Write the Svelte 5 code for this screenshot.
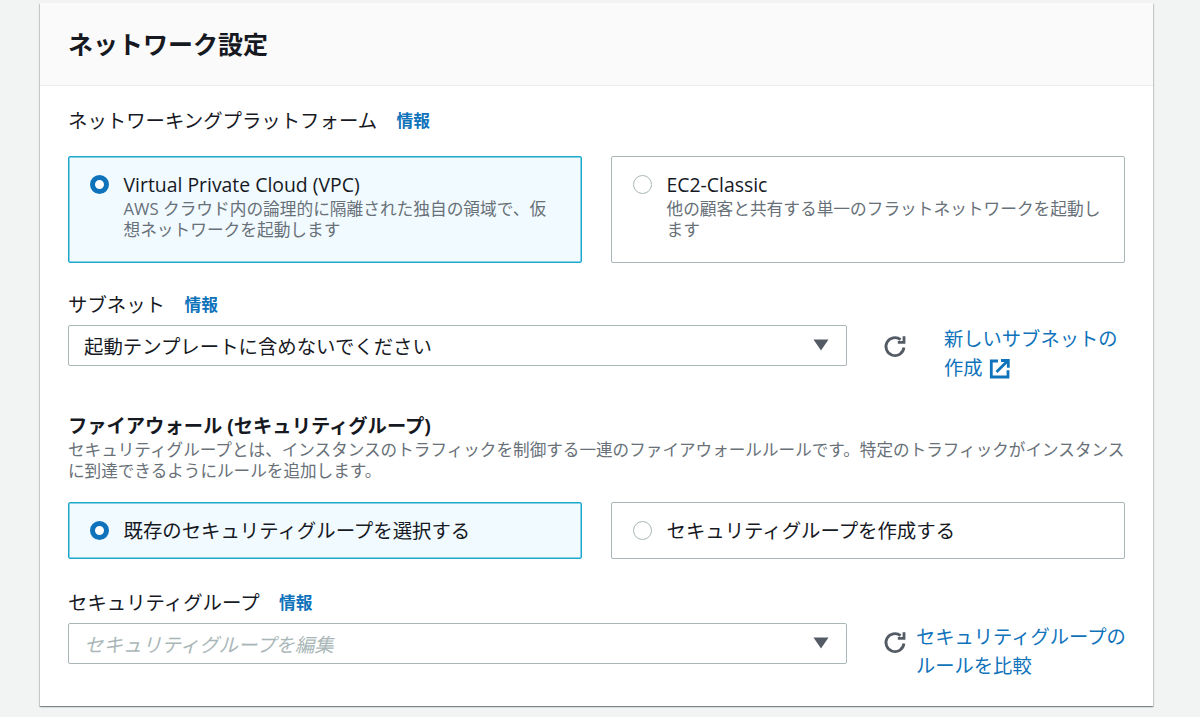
<script>
</script>

{#snippet refresh()}
  <svg class="refresh" width="24" height="24" viewBox="0 0 24 24" fill="none" stroke="#545b64" stroke-width="2.8">
    <path d="M17.6 5.6A9 9 0 1 0 20.9 13.5" />
    <path d="M21 2.2V8.4H14.8" />
  </svg>
{/snippet}

{#snippet caret()}
  <svg class="caret" width="16" height="12" viewBox="0 0 16 12"><path d="M0.5 0.5H15.5L8 11.5Z" fill="#545b64" /></svg>
{/snippet}

<div class="page">
  <section class="panel">
    <header class="panel-head"><h2>ネットワーク設定</h2></header>
    <div class="panel-body">
      <div class="label-row first"><span>ネットワーキングプラットフォーム</span><a href="#info">情報</a></div>

      <div class="tiles tall">
        <div class="tile selected">
          <span class="radio on"></span>
          <div>
            <div class="tile-title">Virtual Private Cloud (VPC)</div>
            <div class="tile-desc">AWS クラウド内の論理的に隔離された独自の領域で、仮想ネットワークを起動します</div>
          </div>
        </div>
        <div class="tile">
          <span class="radio"></span>
          <div>
            <div class="tile-title">EC2-Classic</div>
            <div class="tile-desc">他の顧客と共有する単一のフラットネットワークを起動します</div>
          </div>
        </div>
      </div>

      <div class="label-row subnet"><span>サブネット</span><a href="#info">情報</a></div>
      <div class="select-row">
        <div class="select"><span>起動テンプレートに含めないでください</span>{@render caret()}</div>
        <div class="side first-side">
          {@render refresh()}
          <a class="side-link" href="#new">新しいサブネットの作成
            <svg class="external" width="22" height="20" viewBox="0 0 22 20" fill="none" stroke="#0f73bb" stroke-width="2.8">
              <path d="M9 2H2.3V18H19V11.2" />
              <path d="M7.5 13L18 2.5M12 1.5H19.3V8.8" />
            </svg>
          </a>
        </div>
      </div>

      <h3>ファイアウォール (セキュリティグループ)</h3>
      <p class="hint">セキュリティグループとは、インスタンスのトラフィックを制御する一連のファイアウォールルールです。特定のトラフィックがインスタンスに到達できるようにルールを追加します。</p>

      <div class="tiles short">
        <div class="tile selected center">
          <span class="radio on"></span>
          <div class="tile-plain">既存のセキュリティグループを選択する</div>
        </div>
        <div class="tile center">
          <span class="radio"></span>
          <div class="tile-plain">セキュリティグループを作成する</div>
        </div>
      </div>

      <div class="label-row group"><span>セキュリティグループ</span><a href="#info">情報</a></div>
      <div class="select-row">
        <div class="select"><span class="placeholder">セキュリティグループを編集</span>{@render caret()}</div>
        <div class="side compare">
          {@render refresh()}
          <a class="side-link" href="#compare">セキュリティグループのルールを比較</a>
        </div>
      </div>
    </div>
  </section>
</div>

<style>
  :global(body) {
    margin: 0;
    background: #f2f3f3;
    font-family: "Open Sans", "Noto Sans CJK JP", sans-serif;
    color: #16191f;
  }

  .page {
    height: 717px;
    box-sizing: border-box;
    padding: 3px 47px 0 40px;
    overflow: hidden;
  }

  .panel {
    height: 703px;
    background: #fff;
    box-shadow: 0 1px 1px 0 rgba(0, 28, 36, 0.3), 1px 1px 1px 0 rgba(0, 28, 36, 0.15), -1px 1px 1px 0 rgba(0, 28, 36, 0.15);
  }

  .panel-head {
    height: 83px;
    box-sizing: border-box;
    padding: 0 28px;
    display: flex;
    align-items: center;
    background: #fafafa;
    border-bottom: 1px solid #eaeded;
  }

  h2 {
    margin: 0;
    font-size: 25px;
    font-weight: 700;
    line-height: 32px;
  }

  .panel-body {
    padding: 0 28px;
  }

  .label-row {
    display: flex;
    align-items: center;
    gap: 19.5px;
    font-size: 19.4px;
    line-height: 28px;
  }

  .label-row a {
    color: #0f73bb;
    font-size: 16.7px;
    font-weight: 700;
    text-decoration: none;
  }

  .label-row.first { margin-top: 21px; }
  .label-row.subnet { margin-top: 28px; }
  .label-row.group { margin-top: 30px; }

  .tiles {
    display: grid;
    grid-template-columns: 514px 514px;
    gap: 29px;
  }

  .tiles.tall { margin-top: 21px; height: 107px; }
  .tiles.short { height: 57px; margin-top: 21px; }

  .tile {
    box-sizing: border-box;
    display: flex;
    gap: 14.5px;
    padding: 15px 21px;
    border: 1px solid #aab7b8;
    border-radius: 2px;
    background: #fff;
  }

  .tile.selected {
    background: #f1faff;
    border-color: #1ea7cc;
    box-shadow: inset 0 0 0 0.5px #1ea7cc;
  }

  .tile.center {
    align-items: center;
    padding-top: 0;
    padding-bottom: 0;
  }

  .radio {
    flex: none;
    box-sizing: border-box;
    width: 19px;
    height: 19px;
    margin-top: 3px;
    border-radius: 50%;
    border: 1px solid #aab7b8;
    background: #fff;
  }

  .tile.center .radio { margin-top: 0; }

  .radio.on {
    border: 5.5px solid #0f73bb;
  }

  .tile-title {
    font-size: 19.4px;
    line-height: 26px;
  }

  .tile-desc {
    color: #687078;
    font-size: 16.7px;
    line-height: 21px;
  }

  .tile-plain {
    font-size: 19.4px;
    line-height: 28px;
  }

  .select-row {
    display: flex;
    margin-top: 6px;
  }

  .select {
    box-sizing: border-box;
    flex: none;
    width: 779px;
    height: 41px;
    padding: 0 17px 1px 15px;
    display: flex;
    align-items: center;
    justify-content: space-between;
    border: 1px solid #aab7b8;
    border-radius: 2px;
    font-size: 19.4px;
  }

  .placeholder {
    color: #aab7b8;
    font-style: italic;
  }

  .side {
    display: flex;
    align-items: flex-start;
    margin-left: 36px;
  }

  .first-side { gap: 37px; }
  .compare { gap: 9px; }

  .refresh {
    flex: none;
    margin-top: 9px;
  }

  .compare .refresh { margin-top: 7px; }

  .side-link {
    color: #0f73bb;
    font-size: 19.3px;
    line-height: 29px;
    text-decoration: none;
    margin-top: -1px;
  }

  .first-side .side-link { width: 180px; }
  .compare .side-link { width: 216px; }

  .external {
    vertical-align: -4px;
    margin-left: 1px;
  }

  h3 {
    margin: 32px 0 0;
    font-size: 19.3px;
    line-height: 24px;
    font-weight: 700;
  }

  .hint {
    margin: 1px 0 0;
    color: #687078;
    font-size: 16.6px;
    line-height: 21px;
  }
</style>
